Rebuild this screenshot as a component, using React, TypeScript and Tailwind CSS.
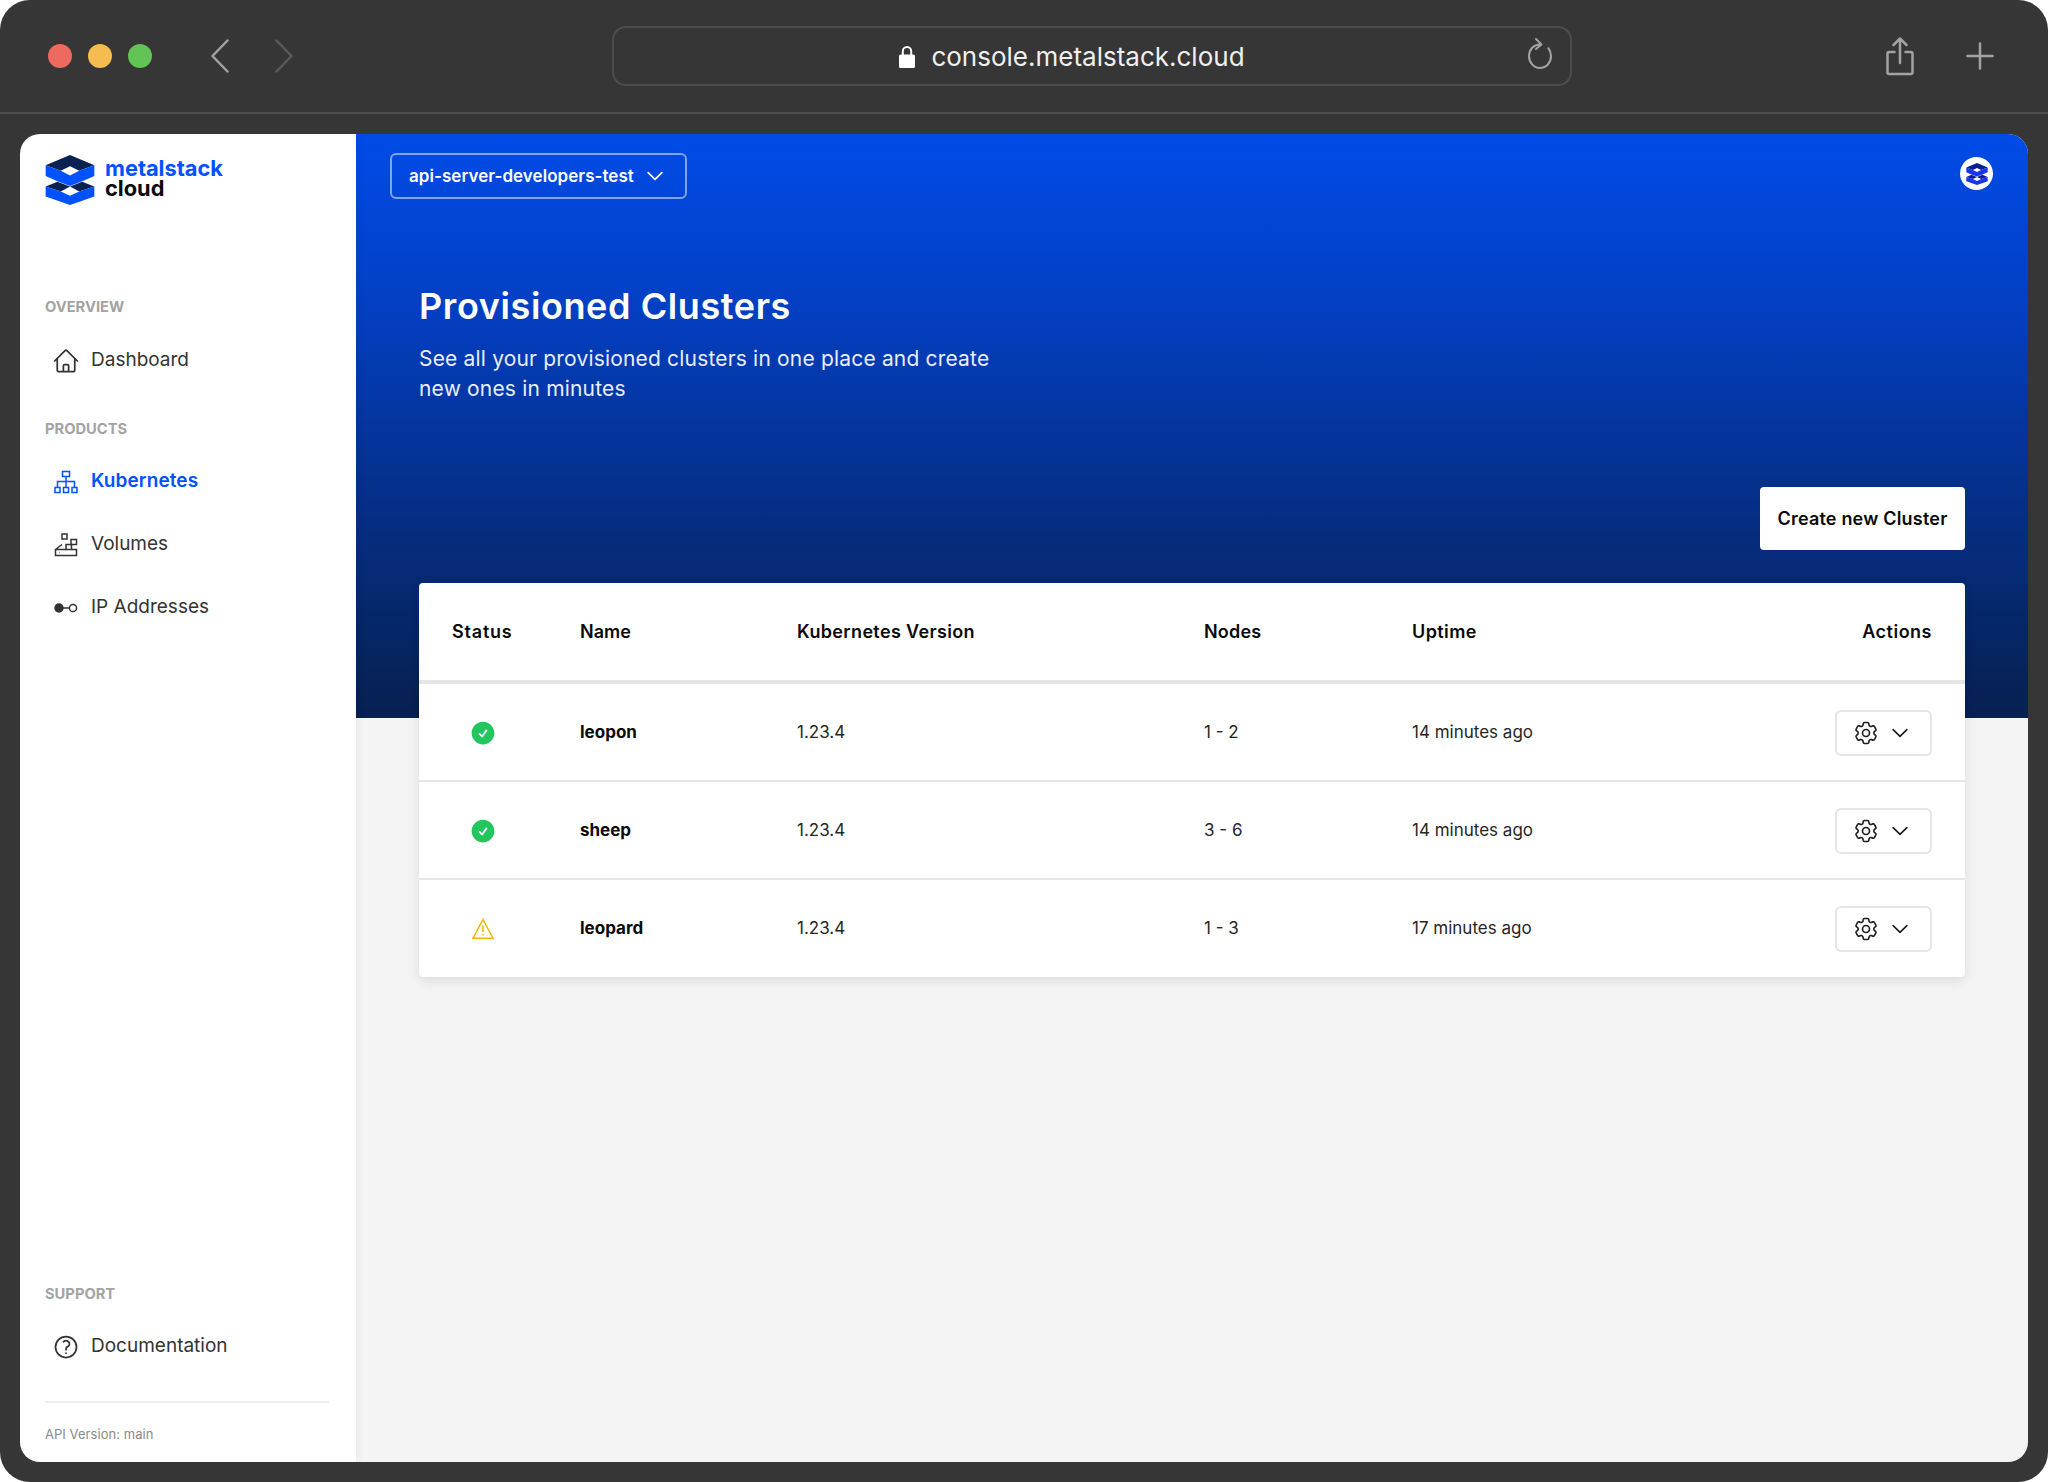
import React from "react";
import {
  HiOutlineHome,
  HiOutlineCog6Tooth,
  HiOutlineChevronDown,
  HiOutlineQuestionMarkCircle,
  HiCheckCircle,
} from "react-icons/hi2";

function Logo({ className, dark = "#0a2152", blue = "#0051ff" }: { className?: string; dark?: string; blue?: string }) {
  return (
    <svg viewBox="14 14 148 152" className={className}>
      <polygon fill={dark} points="88,14 162,45 116,62 88,48 60,62 14,45" />
      <polygon fill={blue} points="14,45 60,62 88,76 116,62 162,45 162,78 125,94 88,108 50,94 14,78" />
      <polygon fill={dark} points="14,110 50,95 88,110 60,125" />
      <polygon fill={dark} points="88,110 125,95 162,110 116,125" />
      <polygon fill={blue} points="14,110 60,125 88,138 116,125 162,110 162,140 88,166 14,140" />
    </svg>
  );
}

function TreeIcon({ className }: { className?: string }) {
  return (
    <svg viewBox="0 0 24 24" fill="none" stroke="currentColor" strokeWidth="1.5" className={className}>
      <rect x="8.5" y="1.5" width="7" height="5" />
      <path d="M12 6.5V17.5M3.5 17.5V11.5H20.5V17.5" />
      <rect x="1" y="17.5" width="5" height="5" />
      <rect x="9.5" y="17.5" width="5" height="5" />
      <rect x="18" y="17.5" width="5" height="5" />
    </svg>
  );
}

function VolumeIcon({ className }: { className?: string }) {
  return (
    <svg viewBox="0 0 24 24" fill="none" stroke="currentColor" strokeWidth="1.5" className={className}>
      <rect x="8" y="1" width="5" height="5" />
      <rect x="17" y="6.5" width="5.5" height="5" />
      <rect x="12" y="11.5" width="5.5" height="5" />
      <path d="M12 16.5H1.5V22.5H22.5V16.5H17.5M1.5 16.5L8 11.5" />
      <path d="M5 19.5H5.5" />
    </svg>
  );
}

function KeyIcon({ className }: { className?: string }) {
  return (
    <svg viewBox="0 0 24 12" fill="none" stroke="currentColor" strokeWidth="1.5" className={className}>
      <circle cx="5" cy="6" r="4" fill="currentColor" />
      <path d="M9 6H15" />
      <circle cx="19" cy="6" r="3.6" />
    </svg>
  );
}

function WarnIcon({ className }: { className?: string }) {
  return (
    <svg viewBox="0 0 22 21" fill="none" stroke="currentColor" strokeWidth="1.5" className={className}>
      <path d="M11 1.5L21 20.2H1Z" strokeLinejoin="miter" />
      <path d="M11 7.5V14" />
      <path d="M11 16V17.5" />
    </svg>
  );
}

function NavItem({ icon, label, active }: { icon: React.ReactNode; label: string; active?: boolean }) {
  return (
    <div
      className={`flex h-[63px] items-center pl-[9px] text-[19px] ${
        active ? "font-semibold tracking-[0.1px] text-[#0051ff]" : "text-[#333333]"
      }`}
    >
      <span className="flex w-[37px] items-center">{icon}</span>
      <span>{label}</span>
    </div>
  );
}

function SectionLabel({ children, className = "" }: { children: React.ReactNode; className?: string }) {
  return <div className={`h-5 text-[14.7px] leading-5 font-bold text-[#a3a3a3] ${className}`}>{children}</div>;
}

const rows = [
  { name: "leopon", nodes: "1 - 2", up: "14 minutes ago", ok: true },
  { name: "sheep", nodes: "3 - 6", up: "14 minutes ago", ok: true },
  { name: "leopard", nodes: "1 - 3", up: "17 minutes ago", ok: false },
];

const gridCols = "grid grid-cols-[128px_217px_407px_208px_1fr] items-center px-[33px]";

export default function App() {
  return (
    <div
      className="h-[1482px] w-[2048px] overflow-hidden bg-white"
      style={{ fontFamily: "Inter, 'Liberation Sans', sans-serif" }}
    >
      <div className="flex h-full flex-col rounded-[30px] bg-[#363636]">
        {/* browser toolbar */}
        <div className="flex h-[114px] shrink-0 items-center border-b-2 border-[#4d4d4d] pl-[48px]">
          <div className="flex gap-4">
            <span className="h-6 w-6 rounded-full bg-[#ee6a5f]" />
            <span className="h-6 w-6 rounded-full bg-[#f5bd4f]" />
            <span className="h-6 w-6 rounded-full bg-[#61c454]" />
          </div>
          <svg viewBox="0 0 18 34" fill="none" stroke="#a3a3a3" strokeWidth="2.5" strokeLinecap="round" strokeLinejoin="round" className="ml-[59px] h-[34px] w-[18px]">
            <path d="M16.5 1.5L1.5 17L16.5 32.5" />
          </svg>
          <svg viewBox="0 0 18 34" fill="none" stroke="#5a5a5a" strokeWidth="2.5" strokeLinecap="round" strokeLinejoin="round" className="ml-[46px] h-[34px] w-[18px]">
            <path d="M1.5 1.5L16.5 17L1.5 32.5" />
          </svg>
          <div className="relative ml-[319px] flex h-[60px] w-[960px] items-center justify-center gap-[16px] rounded-[14px] border-2 border-[#4d4d4d] pr-[40px]">
            <svg viewBox="0 0 16 23" className="h-[23px] w-4" fill="none">
              <path d="M3.8 10V6.2a4.2 4.2 0 0 1 8.4 0V10" stroke="#ffffff" strokeWidth="2" />
              <rect x="0" y="9.5" width="16" height="13.5" rx="1.5" fill="#ffffff" />
            </svg>
            <span className="pt-[2px] text-[26px] leading-none text-[#efefef]">console.metalstack.cloud</span>
            <svg viewBox="0 0 26 34" fill="none" stroke="#a3a3a3" strokeWidth="2" strokeLinecap="round" strokeLinejoin="round" className="absolute right-[17px] top-[9px] h-[34px] w-[26px]">
              <path d="M13 7.5C6.8 7.5 2 12.5 2 19s4.8 12 11 12 11-5.3 11-12c0-3-1-5.7-2.7-7.8" />
              <path d="M9 2l5.5 5.5L9 12" />
            </svg>
          </div>
          <svg viewBox="0 0 28 40" fill="none" stroke="#a3a3a3" strokeWidth="2.5" strokeLinecap="round" strokeLinejoin="round" className="ml-[314px] h-10 w-7">
            <path d="M8.5 16H3a1.5 1.5 0 0 0-1.5 1.5v19A1.5 1.5 0 0 0 3 38h22a1.5 1.5 0 0 0 1.5-1.5v-19A1.5 1.5 0 0 0 25 16h-5.5" />
            <path d="M14 27V2.5M7.5 9L14 2.5 20.5 9" />
          </svg>
          <svg viewBox="0 0 28 28" fill="none" stroke="#a3a3a3" strokeWidth="2.5" strokeLinecap="round" className="ml-[52px] h-7 w-7">
            <path d="M14 1.5v25M1.5 14h25" />
          </svg>
        </div>

        {/* app frame */}
        <div className="flex min-h-0 flex-1 p-5">
          <div className="flex min-w-0 flex-1 overflow-hidden rounded-[20px]">
            {/* sidebar */}
            <aside className="z-10 flex w-[336px] shrink-0 flex-col bg-white pl-[25px] pr-[27px] shadow-[2px_0_8px_rgba(0,0,0,0.05)]">
              <div className="mt-[21px] flex h-[50px] items-center gap-[10px]">
                <Logo className="h-[50px] w-[50px]" />
                <div className="mb-[4px] text-[21.8px] leading-[20px] font-bold">
                  <div className="text-[#0051ff]">metalstack</div>
                  <div className="text-[#0a0a0a]">cloud</div>
                </div>
              </div>
              <SectionLabel className="mt-[92px]">OVERVIEW</SectionLabel>
              <div className="mt-[12px]">
                <NavItem icon={<HiOutlineHome className="-ml-[2px] h-7 w-7 text-[#333333]" />} label="Dashboard" />
              </div>
              <SectionLabel className="mt-[27px]">PRODUCTS</SectionLabel>
              <div className="mt-[11px]">
                <NavItem active icon={<TreeIcon className="h-6 w-6" />} label="Kubernetes" />
                <NavItem icon={<VolumeIcon className="h-6 w-6 text-[#333333]" />} label="Volumes" />
                <NavItem icon={<KeyIcon className="h-3 w-6 text-[#333333]" />} label="IP Addresses" />
              </div>
              <SectionLabel className="mt-auto">SUPPORT</SectionLabel>
              <div className="mt-[11px]">
                <NavItem icon={<HiOutlineQuestionMarkCircle className="-ml-[2px] h-7 w-7 text-[#333333]" />} label="Documentation" />
              </div>
              <div className="mt-[23px] border-t-2 border-[#eeeeee] pt-[21px] pb-[18px] text-[13px] leading-[20px] tracking-[0.05px] text-[#8a8a8a]">
                API Version: main
              </div>
            </aside>

            {/* main */}
            <main className="min-w-0 flex-1 bg-[#f4f4f4] bg-[linear-gradient(180deg,#004be8_0%,#033fc2_30%,#05308c_60%,#06204f_100%)] bg-[length:100%_584px] bg-no-repeat pl-[63px] pr-[63px]">
              <div className="-ml-[29px] -mr-[28px] flex items-start justify-between pt-[19px]">
                <div className="flex h-[46px] w-[297px] items-center justify-between rounded-[6px] border-2 border-white/50 pl-[17px] pr-[19px] text-[17px] font-semibold tracking-[0.05px] text-white">
                  <span className="pt-[2px]">api-server-developers-test</span>
                  <HiOutlineChevronDown className="h-[22px] w-[22px] shrink-0" strokeWidth={1.8} />
                </div>
                <div className="mt-[4px] flex h-[33px] w-[33px] items-center justify-center rounded-full bg-white">
                  <Logo className="h-[22px] w-[24px]" dark="#0a1f8f" blue="#1a35ee" />
                </div>
              </div>

              <h1 className="mt-[87px] text-[36px] leading-[40px] font-semibold tracking-[0.6px] text-white">Provisioned Clusters</h1>
              <p className="mt-[18px] w-[620px] text-[21px] leading-[30px] tracking-[0.18px] text-[#e8eefc]">
                See all your provisioned clusters in one place and create
                <br />
                new ones in minutes
              </p>

              <div className="mt-[83px] flex justify-end">
                <div className="flex h-[63px] w-[205px] items-center justify-center rounded-[4px] bg-white text-[18px] font-semibold tracking-[0.2px] text-[#0a0a0a]">
                  Create new Cluster
                </div>
              </div>

              <div className="mt-[33px] overflow-hidden rounded-[4px] bg-white shadow-[0_4px_12px_rgba(0,0,0,0.1)]">
                <div className={`${gridCols} h-[101px] border-b-4 border-[#e5e5e5] text-[18px] font-semibold text-[#0a0a0a]`}>
                  <div className="tracking-[0.8px]">Status</div>
                  <div>Name</div>
                  <div className="tracking-[0.35px]">Kubernetes Version</div>
                  <div className="tracking-[0.2px]">Nodes</div>
                  <div className="flex items-center justify-between">
                    <span className="tracking-[0.4px]">Uptime</span>
                    <span className="tracking-[0.5px]">Actions</span>
                  </div>
                </div>
                {rows.map((r, i) => (
                  <div
                    key={r.name}
                    className={`${gridCols} text-[17px] text-[#262626] ${i < 2 ? "h-[98px] border-b-2 border-[#e5e5e5] pt-[1px]" : "h-[97px]"}`}
                  >
                    <div className="flex w-[61px] justify-center">
                      {r.ok ? (
                        <HiCheckCircle className="h-7 w-7 text-[#22c55e]" />
                      ) : (
                        <WarnIcon className="h-[21px] w-[22px] text-[#f5b400]" />
                      )}
                    </div>
                    <div className="pt-[1px] font-bold text-[#0a0a0a]">{r.name}</div>
                    <div className="pt-[1px]">1.23.4</div>
                    <div className="pt-[1px]">{r.nodes}</div>
                    <div className="flex items-center justify-between">
                      <span className="pt-[1px]">{r.up}</span>
                      <div className="flex h-[46px] w-[97px] items-center gap-[9px] rounded-[6px] border-2 border-[#e5e5e5] pl-[15px] text-[#1f1f1f]">
                        <HiOutlineCog6Tooth className="h-7 w-7" strokeWidth={1.4} />
                        <HiOutlineChevronDown className="h-[22px] w-[22px]" strokeWidth={1.8} />
                      </div>
                    </div>
                  </div>
                ))}
              </div>
            </main>
          </div>
        </div>
      </div>
    </div>
  );
}
